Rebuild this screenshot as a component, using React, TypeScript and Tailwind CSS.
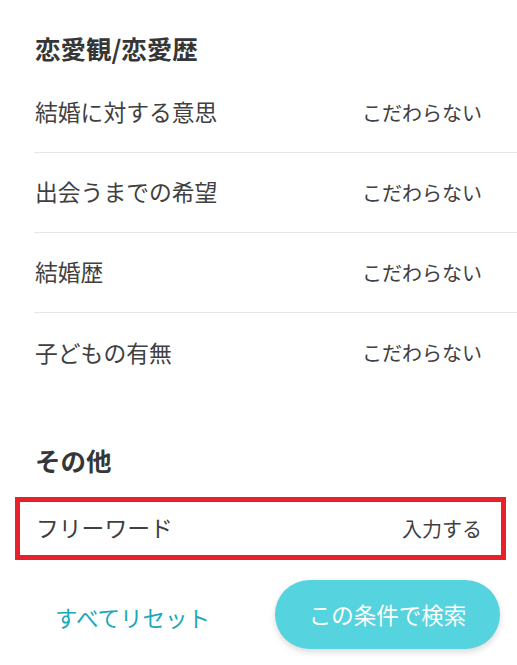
import React from "react";

const font = {
  fontFamily: '"Noto Sans CJK JP", "Noto Sans", sans-serif',
};

const loveRows = [
  { label: "結婚に対する意思", value: "こだわらない" },
  { label: "出会うまでの希望", value: "こだわらない" },
  { label: "結婚歴", value: "こだわらない" },
  { label: "子どもの有無", value: "こだわらない" },
];

const App: React.FC = () => {
  return (
    <div className="w-[517px] h-[665px] bg-white overflow-hidden text-[#404040]" style={font}>
      <h2 className="pt-[33px] pl-[35px] text-[25.5px] leading-[30px] font-bold text-[#363636]">
        恋愛観/恋愛歴
      </h2>

      <ul className="mt-[10px] ml-[34px]">
        {loveRows.map((row, i) => (
          <li
            key={row.label}
            className={
              "h-[80px] flex items-center justify-between pl-px pr-[35px] " +
              (i < loveRows.length - 1 ? "border-b border-[#e6e6e6]" : "")
            }
          >
            <span className="text-[22.8px] leading-none">{row.label}</span>
            <span className="text-[20px] leading-none">{row.value}</span>
          </li>
        ))}
      </ul>

      <h2 className="mt-[52px] pl-[35px] text-[25.5px] leading-[30px] font-bold text-[#363636]">
        その他
      </h2>

      <div className="mt-[22px] ml-[15px] mr-[11px] h-[63px] border-[5px] border-[#e8202a] flex items-center justify-between pl-[16px] pr-[19px]">
        <span className="text-[22.8px] leading-none">フリーワード</span>
        <span className="text-[20px] leading-none">入力する</span>
      </div>

      <div className="mt-[20px] flex items-center">
        <button className="ml-[55px] mt-[5px] text-[22.5px] leading-none text-[#19a9b8]">
          すべてリセット
        </button>
        <button className="ml-auto mr-[17px] w-[225px] h-[69px] rounded-full bg-[#55d3de] text-white text-[22.5px] leading-none shadow-[0_3px_6px_rgba(0,0,0,0.15)]">
          この条件で検索
        </button>
      </div>
    </div>
  );
};

export default App;
